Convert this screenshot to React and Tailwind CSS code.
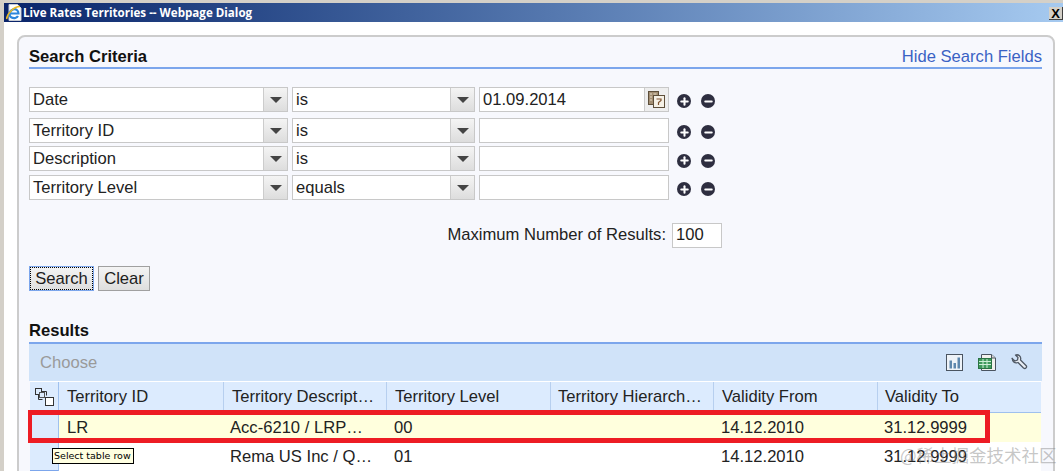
import { Plus, Minus } from "lucide-react";

const criteria = [
  { field: "Date", op: "is", value: "01.09.2014", calendar: true, mb: "mb-[6px]", iconPad: "pt-[3px]" },
  { field: "Territory ID", op: "is", value: "", mb: "mb-[3px]", iconPad: "pt-[3px]" },
  { field: "Description", op: "is", value: "", mb: "mb-[4px]", iconPad: "pt-[4px]" },
  { field: "Territory Level", op: "equals", value: "", mb: "", iconPad: "pt-[3px]" },
];

const columns = [
  { label: "Territory ID", pad: "pl-[8px]" },
  { label: "Territory Descript…", pad: "pl-[8px]" },
  { label: "Territory Level", pad: "pl-[8px]" },
  { label: "Territory Hierarch…", pad: "pl-[7px]" },
  { label: "Validity From", pad: "pl-[8px]" },
  { label: "Validity To", pad: "pl-[7px]" },
];

const cellPads = ["pl-[8px]", "pl-[6px]", "pl-[7px]", "pl-[7px]", "pl-[7px]", "pl-[6px]"];

const rows = [
  { cells: ["LR", "Acc-6210 / LRP…", "00", "", "14.12.2010", "31.12.9999"], bg: "bg-[#ffffdd]" },
  { cells: ["", "Rema US Inc / Q…", "01", "", "14.12.2010", "31.12.9999"], bg: "bg-white" },
];

const tableCols = "grid-cols-[29px_165px_163px_164px_163px_164px_163px]";

function Arrow() {
  return (
    <div className="w-[24px] h-full shrink-0 border-l border-[#cccccc] bg-gradient-to-b from-[#f4f4f4] to-[#dddddd] flex items-center justify-center">
      <div className="w-0 h-0 border-x-[6px] border-x-transparent border-t-[6px] border-t-[#444444]" />
    </div>
  );
}

function Select({ value, width }) {
  return (
    <div className={`${width} h-[25px] shrink-0 bg-white border border-[#c8c8c8] flex items-center`}>
      <span className="flex-1 pl-[3px] pt-[2px] leading-none text-[#222222]">{value}</span>
      <Arrow />
    </div>
  );
}

function CalendarIcon() {
  return (
    <svg width="17" height="17" viewBox="0 0 17 17">
      <rect x="0.5" y="0.5" width="10" height="13" fill="#a38e72" stroke="#5e4f3a" />
      <path d="M2 3h2M5.500 3h3M2 6h2M2 9h2" stroke="#e6dcc8" />
      <rect x="5.500" y="4.500" width="11" height="12" fill="#f6f1e6" stroke="#5e4f3a" />
      <path d="M8.500 8h4.500v1.500l-2.500 2v2.500" fill="none" stroke="#7f5330" strokeWidth="1.200" />
    </svg>
  );
}

function RoundBtn({ Icon }) {
  return (
    <span className="w-[14px] h-[14px] rounded-full bg-[#2e2e40] flex items-center justify-center">
      <Icon size={11} strokeWidth={4.5} className="text-white" />
    </span>
  );
}

function ChartIcon() {
  return (
    <svg width="18" height="18" viewBox="0 0 18 18">
      <rect x="0.500" y="0.500" width="16" height="16" fill="#eef3f8" stroke="#4a5460" />
      <path d="M3.500 6.500h2.500v8h-2.500zM7.500 9h2.500v5.500h-2.500zM11.500 3.500h2.500v11h-2.500z" fill="#5d87ad" />
    </svg>
  );
}

function SheetIcon() {
  return (
    <svg width="19" height="18" viewBox="0 0 19 18">
      <path d="M3.500 0.500H13.500l4 3.500v12.500h-14z" fill="#f2f2ee" stroke="#4a5460" />
      <path d="M13.500 0.500v3.500h4" fill="#d8d8d4" stroke="#4a5460" />
      <rect x="0.500" y="4.500" width="13" height="10" fill="#3f9a5c" stroke="#2a7343" />
      <path d="M1 7.500h12M1 10.500h12M5 5v9M9 5v9" stroke="#cdeed6" />
    </svg>
  );
}

function WrenchIcon() {
  return (
    <svg width="17" height="17" viewBox="0 0 17 17">
      <path
        d="M1 4.500l3 2.500 2.500-1 0.500-2.500-2.500-2.500c3-1 6 1.500 5 5l5.500 5.500c1.500 1.500-0.500 4-2.500 2.500l-5.500-5.500c-3.500 1-6-1-5.500-4z"
        fill="#e8eef4"
        stroke="#4f5864"
        strokeWidth="1.300"
        strokeLinejoin="round"
      />
    </svg>
  );
}

function SelectAllIcon() {
  return (
    <svg width="19" height="19" viewBox="0 0 19 19">
      <rect x="0.500" y="0.500" width="6" height="6" fill="#dcebfd" stroke="#333333" />
      <path d="M6.500 3.500h5v4M3.500 6.500v5h4" fill="none" stroke="#333333" />
      <rect x="4.500" y="4.500" width="5" height="5" fill="#dcebfd" stroke="#555555" />
      <rect x="10.500" y="9.500" width="8" height="8" fill="#ffffff" stroke="#333333" />
    </svg>
  );
}

function IeIcon() {
  return (
    <svg width="16" height="17" viewBox="0 0 16 17">
      <path d="M3 0.500H11.500L15 4v12.500H3z" fill="#ffffff" stroke="#c8ccd4" />
      <path d="M4 9.500h8.500C12.500 6 9.500 4.500 7 5.500 3 7 2.500 12 5.500 13.500c2.500 1.200 5.500 0.500 6.500-1.500" fill="none" stroke="#2c86dc" strokeWidth="2.200" />
      <path d="M0.500 15C1.500 9 8 2.500 14 2.500" fill="none" stroke="#e9b824" strokeWidth="1.600" />
    </svg>
  );
}

export default function App() {
  return (
    <div className="relative w-[1063px] h-[471px] overflow-hidden bg-white font-['Liberation_Sans',Arial,sans-serif] text-[16.6px] text-[#1c1c1c]">
      {/* window chrome */}
      <div className="h-[3px] bg-[#d4d0c8]" />
      <div className="flex h-[468px]">
        <div className="w-[4px] shrink-0 bg-[#d4d0c8]" />
        <div className="flex-1 flex flex-col min-w-0">
          <div className="h-[19px] shrink-0 bg-gradient-to-r from-[#0a246a] to-[#a6caf0] flex items-center">
            <span className="ml-[2px] flex"><IeIcon /></span>
            <span className="ml-[1px] font-['Open_Sans',sans-serif] font-bold text-[11.6px] leading-none text-white whitespace-nowrap">
              Live Rates Territories -- Webpage Dialog
            </span>
            <div className="ml-auto w-[14px] h-[13px] mt-[2px] bg-[#d4d0c8] border-b border-r border-[#404040] flex items-center justify-center text-[13px] font-bold text-black leading-none">
              X
            </div>
          </div>

          {/* dialog body */}
          <div className="flex-1 bg-white pt-[13px] pl-[13px] min-h-0">
            <div className="h-[500px] w-[1038px] bg-[#f7f8fd] border-2 border-[#cccccc] rounded-t-[8px] pt-[9px] pl-[10px] pr-[11px]">
              <div className="flex items-center justify-between h-[19px] pt-[2px] border-b-2 border-[#7ca6ec] box-content">
                <h2 className="font-bold text-[16.6px] leading-none text-[#111111]">Search Criteria</h2>
                <a className="leading-none text-[#3a62c4]">Hide Search Fields</a>
              </div>

              <div className="mt-[18px]">
                {criteria.map((c) => (
                  <div key={c.field} className={`flex items-center ${c.mb}`}>
                    <Select value={c.field} width="w-[259px]" />
                    <div className="w-[4px]" />
                    <Select value={c.op} width="w-[183px]" />
                    <div className="w-[4px]" />
                    <div className="w-[190px] h-[25px] bg-white border border-[#c8c8c8] flex items-center">
                      <span className="flex-1 pl-[3px] pt-[2px] leading-none text-[#222222]">{c.value}</span>
                      {c.calendar && (
                        <div className="w-[24px] h-full border-l border-[#cccccc] bg-[#eeeeee] flex items-center justify-center">
                          <CalendarIcon />
                        </div>
                      )}
                    </div>
                    <div className={`ml-[8px] flex items-center gap-[10px] ${c.iconPad}`}>
                      <RoundBtn Icon={Plus} />
                      <RoundBtn Icon={Minus} />
                    </div>
                  </div>
                ))}
              </div>

              <div className="mt-[23px] w-[693px] flex items-center justify-end gap-[6px] h-[25px]">
                <span className="leading-none text-[#222222]">Maximum Number of Results:</span>
                <div className="w-[50px] h-[25px] bg-white border border-[#c8c8c8] pl-[3px] flex items-center leading-none">100</div>
              </div>

              <div className="mt-[18px] flex gap-[4px]">
                <button className="w-[65px] h-[25px] pt-[2px] bg-gradient-to-b from-[#f4f4f4] to-[#dedede] border border-[#7ca6ec] outline-1 outline-dotted -outline-offset-2 outline-black leading-none">
                  Search
                </button>
                <button className="w-[52px] h-[25px] pt-[2px] bg-gradient-to-b from-[#f4f4f4] to-[#dedede] border border-[#a0a0a0] leading-none">
                  Clear
                </button>
              </div>

              <h3 className="mt-[32px] h-[19px] font-bold text-[16.6px] leading-none text-[#111111]">Results</h3>

              <div className="w-[1013px]">
                <div className="h-[39px] bg-[#d0e3f9] border-t-2 border-[#7ca6ec] flex items-center pl-[11px] pr-[14px]">
                  <span className="text-[#9a9a9a] leading-none pt-[2px]">Choose</span>
                  <div className="ml-auto flex items-center gap-[14px]">
                    <ChartIcon />
                    <SheetIcon />
                    <WrenchIcon />
                  </div>
                </div>

                <div className={`grid ${tableCols} h-[32px] border-t border-white border-b border-b-[#9fc0ee] bg-[#dcebfe] mx-[1px]`}>
                  <div className="flex items-center justify-center border-r border-[#9fc0ee]"><SelectAllIcon /></div>
                  {columns.map((col, i) => (
                    <div key={col.label} className={`flex items-center ${col.pad} whitespace-nowrap leading-none text-[#222222] ${i < 5 ? "border-r border-[#b7cfef]" : ""}`}>
                      {col.label}
                    </div>
                  ))}
                </div>

                {rows.map((r, idx) => (
                  <div key={idx} className={`grid ${tableCols} h-[29px] ${r.bg} mx-[1px]`}>
                    <div className="bg-[#dcebfe] border-r border-[#9fc0ee] border-b border-b-[#7ca6ec]" />
                    {r.cells.map((cell, i) => (
                      <div key={i} className={`flex items-center ${cellPads[i]} pt-[2px] whitespace-nowrap leading-none text-[#222222]`}>
                        {cell}
                      </div>
                    ))}
                  </div>
                ))}
              </div>
            </div>
          </div>
        </div>
      </div>

      {/* annotation drawn over the screenshot */}
      <div className="absolute left-[28px] top-[410px] w-[962px] h-[33px] border-[5px] border-l-[4px] border-[#ed1c24]" />
      <div className="absolute left-[52px] top-[448px] w-[82px] h-[16px] bg-[#ffffe1] border border-black flex items-center pl-[1px] font-['DejaVu_Sans',sans-serif] text-[9.5px] leading-none text-black whitespace-nowrap">
        Select table row
      </div>
      <div className="absolute left-[900px] top-[446px] font-['Noto_Sans_CJK_SC',sans-serif] text-[17.5px] leading-none text-[#8888887a] whitespace-nowrap">
        @稀土掘金技术社区
      </div>
    </div>
  );
}
